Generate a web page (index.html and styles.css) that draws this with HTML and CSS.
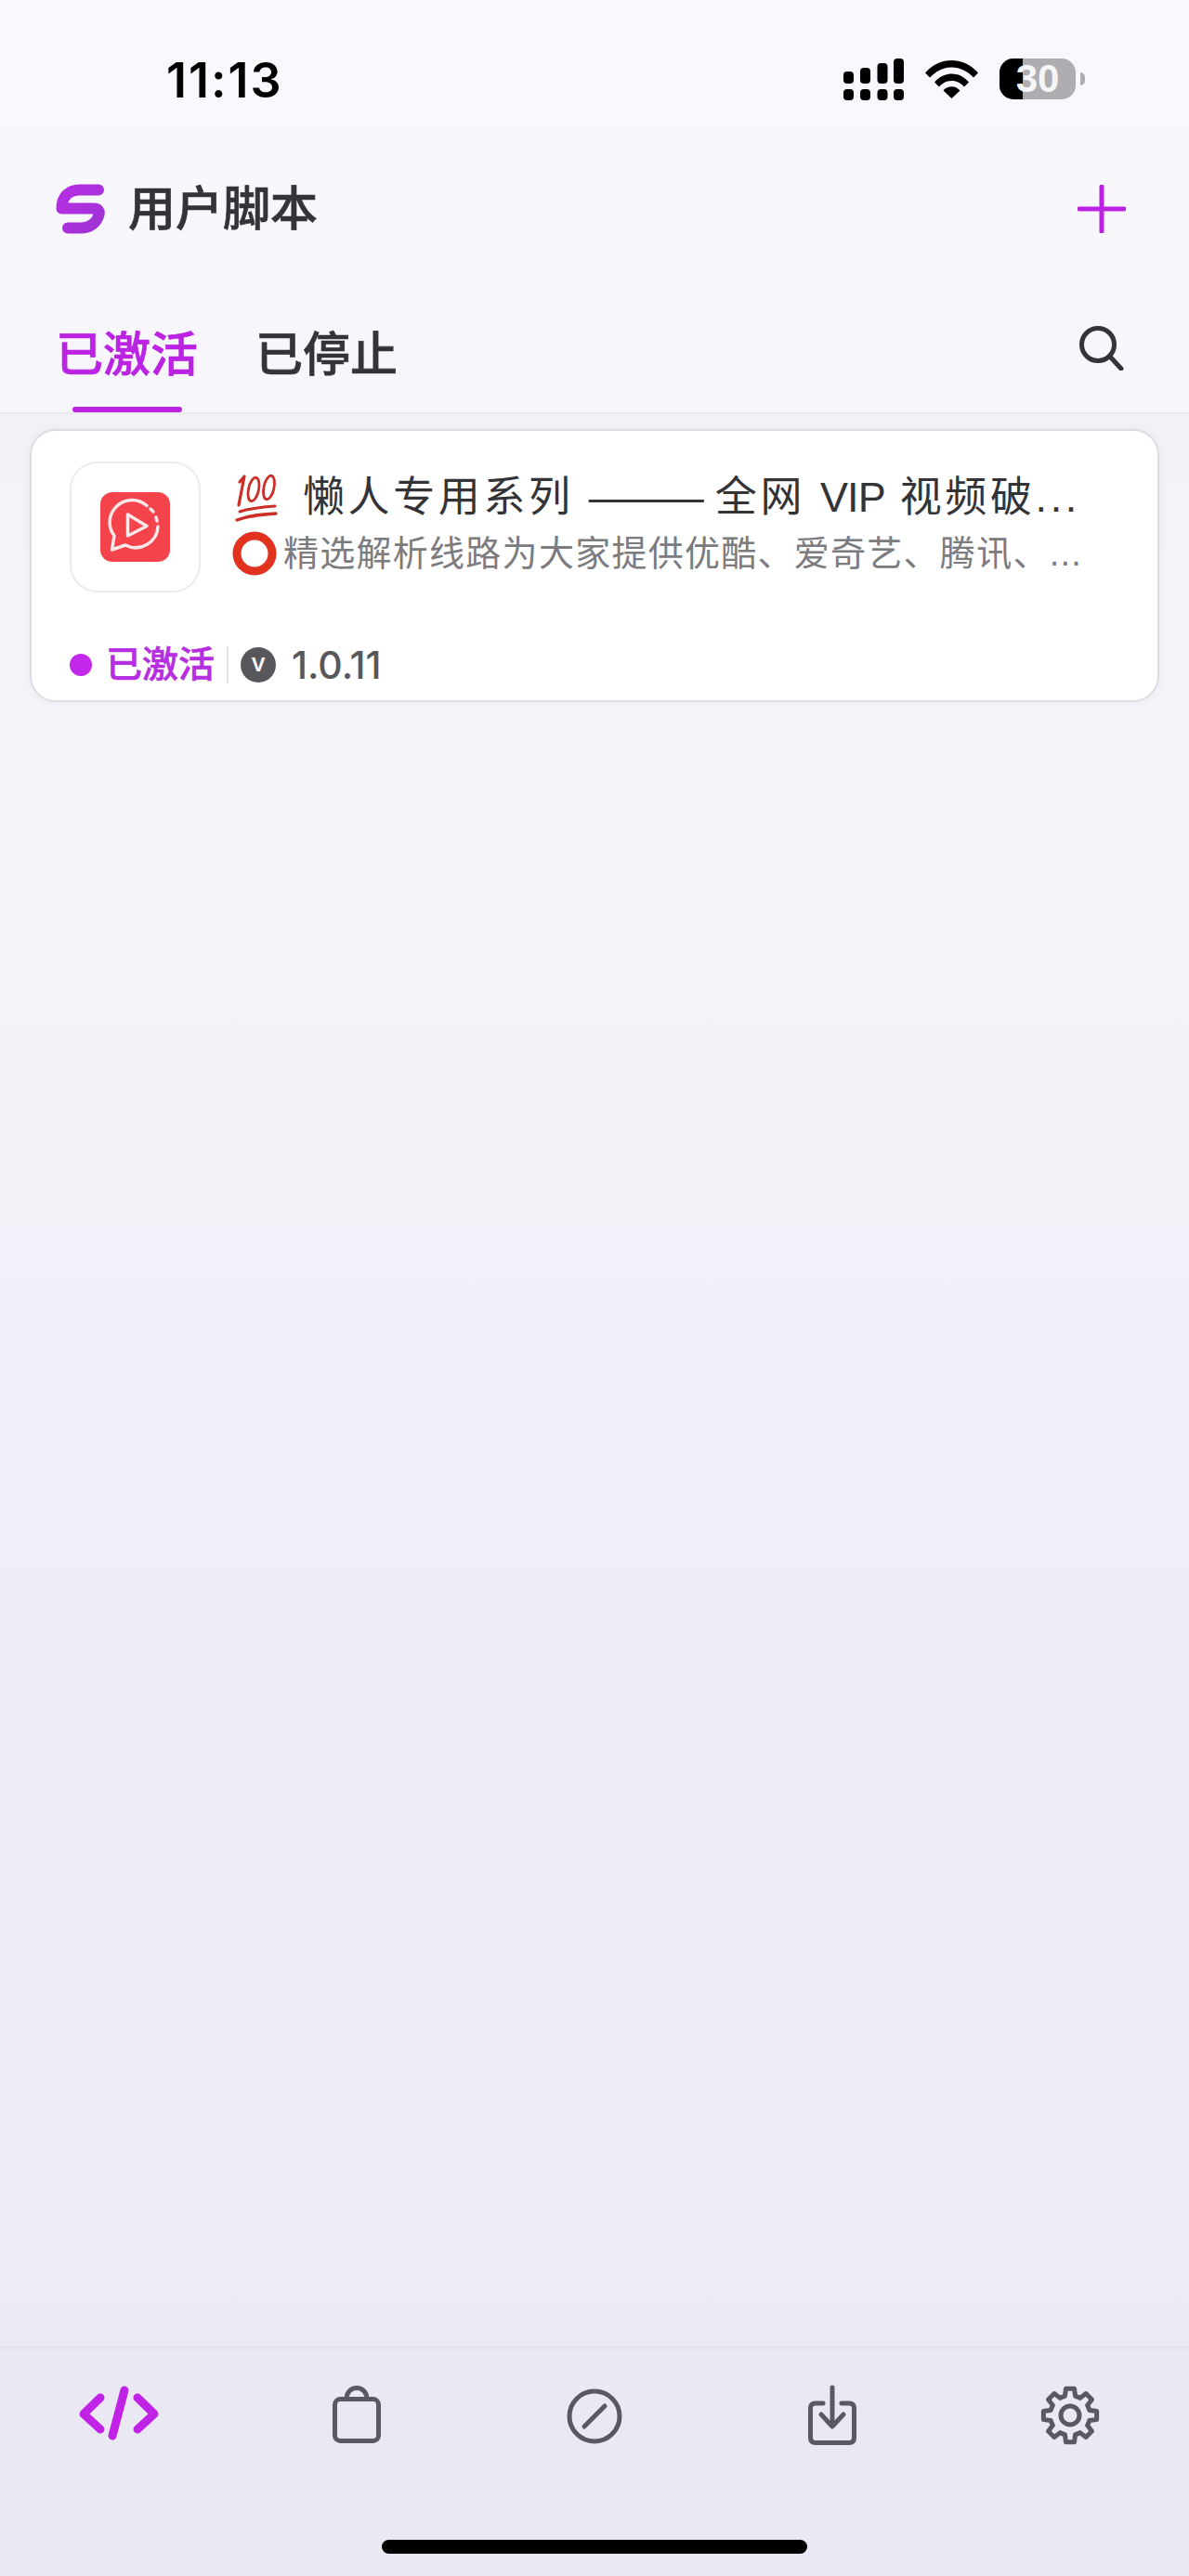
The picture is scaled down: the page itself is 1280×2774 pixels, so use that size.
FILE: index.html
```html
<!DOCTYPE html>
<html lang="zh-CN">
<head>
<meta charset="utf-8">
<title>用户脚本</title>
<link rel="stylesheet" href="styles.css">
</head>
<body>
<div class="app">
  <div class="statusbar">
    <span class="clock">11:13</span>
    <div class="status-icons">
      <svg class="signal" width="65" height="45" viewBox="0 0 65 45" aria-hidden="true">
        <rect x="0" y="14" width="11" height="13" rx="4"/>
        <rect x="18" y="10" width="11" height="17" rx="4"/>
        <rect x="36.500" y="5" width="11" height="22" rx="4"/>
        <rect x="54" y="0" width="11" height="27" rx="4"/>
        <rect x="0" y="33" width="11" height="12" rx="4"/>
        <rect x="18" y="33" width="11" height="12" rx="4"/>
        <rect x="36.500" y="33" width="11" height="12" rx="4"/>
        <rect x="54" y="33" width="11" height="12" rx="4"/>
      </svg>
      <svg class="wifi" width="57" height="41" viewBox="0 0 57 41" aria-hidden="true">
        <path d="M0 13.500C7.500 4.800 17.500 0 28.500 0S49.500 4.800 57 13.500L52 18.500C45.500 11.500 37.500 7.500 28.500 7.500S11.500 11.500 5 18.500Z"/>
        <path d="M10 23.500C14.800 17.800 21.300 14.500 28.500 14.500S42.200 17.800 47 23.500L42 28.500C38.500 24.500 33.800 22 28.500 22S18.500 24.500 15 28.500Z"/>
        <path d="M19.500 32.500C22 29.800 25 28.300 28.500 28.300S35 29.800 37.500 32.500L28.500 41Z"/>
      </svg>
      <div class="battery">
        <div class="battery-body">
          <span class="battery-fill"></span>
          <span class="battery-level">30</span>
        </div>
        <span class="battery-cap"></span>
      </div>
    </div>
  </div>

  <header class="topbar">
    <div class="brand">
      <svg class="brand-mark" width="53" height="54" viewBox="0 0 53 54" aria-hidden="true">
        <defs>
          <linearGradient id="markFill" x1="0" y1="0" x2="1" y2="1">
            <stop offset="0" stop-color="#b62fe4"/>
            <stop offset="1" stop-color="#9f32d4"/>
          </linearGradient>
        </defs>
        <path d="M46 6.500H26C14 6.500 6.500 14 6.500 26.500H41C45.500 26.500 47.500 29 46.500 33C44.500 42 36.500 47.500 27 47.500H13" fill="none" stroke="url(#markFill)" stroke-width="12" stroke-linecap="round" stroke-linejoin="round"/>
      </svg>
      <h1 class="brand-title">用户脚本</h1>
    </div>
    <svg class="add-icon" width="52" height="52" viewBox="0 0 52 52" aria-hidden="true">
      <path d="M26 2V50M2 26H50"/>
    </svg>
  </header>

  <nav class="tabs">
    <div class="tab tab-active">已激活<span class="tab-line"></span></div>
    <div class="tab">已停止</div>
    <svg class="search-icon" width="48" height="48" viewBox="0 0 48 48" aria-hidden="true">
      <circle cx="20" cy="20" r="17.500"/>
      <path d="M32.500 32.500L45 46"/>
    </svg>
  </nav>

  <main class="list">
    <article class="card">
      <div class="card-top">
        <div class="app-icon">
          <svg width="75" height="75" viewBox="0 0 75 75" aria-hidden="true">
            <rect width="75" height="75" rx="13" fill="#f5434b"/>
            <path d="M50 14.500A24 24 0 0 0 15 47L12.500 62L27 57A24 24 0 0 0 62 37" fill="none" stroke="#fbe7e8" stroke-width="3.500" stroke-linejoin="round" stroke-linecap="round"/>
            <path d="M54 18L57 21M60 27L61 31" fill="none" stroke="#fbe7e8" stroke-width="3.500" stroke-linecap="round"/>
            <path d="M29.500 24V47L50 36.500Z" fill="none" stroke="#fbe7e8" stroke-width="3.500" stroke-linejoin="round"/>
          </svg>
        </div>
        <div class="card-text">
          <div class="script-name">
            <svg class="emoji-hundred" width="48" height="52" viewBox="0 0 48 52" role="img" aria-label="💯">
              <g fill="none" stroke="#cb2f27" stroke-linecap="round">
                <path d="M6 9L11 3L5 34" stroke-width="3.200" stroke-linejoin="round"/>
                <ellipse cx="21" cy="17" rx="5.500" ry="13" transform="rotate(12 21 17)" stroke-width="2.800"/>
                <ellipse cx="37.500" cy="15" rx="5.500" ry="13" transform="rotate(12 37.500 15)" stroke-width="2.800"/>
                <path d="M6 41C18 37 30 36 44 35" stroke-width="3"/>
                <path d="M3 50C16 45 30 44 45 43" stroke-width="3.400"/>
              </g>
            </svg>
            <span class="script-name-text">懒人专用系列 <span class="name-dash">———</span> 全网 <span class="name-latin">VIP</span> 视频破...</span>
          </div>
          <div class="script-desc">
            <svg class="emoji-ring" width="48" height="48" viewBox="0 0 48 48" role="img" aria-label="⭕">
              <circle cx="24" cy="24" r="19" fill="none" stroke="#e1311f" stroke-width="9"/>
            </svg>
            <span class="script-desc-text">精选解析线路为大家提供优酷、爱奇艺、腾讯、...</span>
          </div>
        </div>
      </div>
      <div class="card-meta">
        <span class="meta-dot"></span>
        <span class="meta-state">已激活</span>
        <span class="meta-divider"></span>
        <span class="meta-badge">V</span>
        <span class="meta-version">1.0.11</span>
      </div>
    </article>
  </main>

  <footer class="bottom">
    <div class="bottom-nav">
      <div class="nav-item nav-active">
        <svg width="88" height="58" viewBox="0 0 88 58" aria-hidden="true">
          <path d="M24 12L6 29.500L24 46M64 12L82 29.500L64 46M50 4L37 53"/>
        </svg>
      </div>
      <div class="nav-item">
        <svg width="52" height="62" viewBox="0 0 52 62" aria-hidden="true">
          <rect x="2.500" y="14.500" width="47" height="45" rx="6"/>
          <path d="M15 14.500C15 7 20 2.500 26 2.500S37 7 37 14.500"/>
        </svg>
      </div>
      <div class="nav-item nav-lower">
        <svg width="60" height="60" viewBox="0 0 60 60" aria-hidden="true">
          <circle cx="30" cy="30" r="27"/>
          <path d="M19 41L41 19"/>
        </svg>
      </div>
      <div class="nav-item">
        <svg width="52" height="64" viewBox="0 0 52 64" aria-hidden="true">
          <path d="M16 19H8C4.500 19 2.500 21 2.500 24.500V56C2.500 59.500 4.500 61.500 8 61.500H44C47.500 61.500 49.500 59.500 49.500 56V24.500C49.500 21 47.500 19 44 19H36"/>
          <path d="M26 2V43M14 31L26 44L38 31"/>
        </svg>
      </div>
      <div class="nav-item">
        <svg width="64" height="64" viewBox="-32 -32 64 64" aria-hidden="true">
          <path d="M20.770 -5.560L28.640 -4.540V4.540L20.770 5.560A21.500 21.500 0 0 1 18.620 10.750L23.460 17.050L17.050 23.460L10.750 18.620A21.500 21.500 0 0 1 5.560 20.770L4.540 28.640H-4.540L-5.560 20.770A21.500 21.500 0 0 1 -10.750 18.620L-17.050 23.460L-23.460 17.050L-18.620 10.750A21.500 21.500 0 0 1 -20.770 5.560L-28.640 4.540V-4.540L-20.770 -5.560A21.500 21.500 0 0 1 -18.620 -10.750L-23.460 -17.050L-17.050 -23.460L-10.750 -18.620A21.500 21.500 0 0 1 -5.560 -20.770L-4.540 -28.640H4.540L5.560 -20.770A21.500 21.500 0 0 1 10.750 -18.620L17.050 -23.460L23.460 -17.050L18.620 -10.750A21.500 21.500 0 0 1 20.770 -5.560Z"/>
          <circle cx="0" cy="0" r="10"/>
        </svg>
      </div>
    </div>
    <div class="home-bar"></div>
  </footer>
</div>
</body>
</html>
```
FILE: styles.css
```css
* {
  box-sizing: border-box;
}

html,
body {
  margin: 0;
  padding: 0;
}

body {
  font-family: "Liberation Sans", "Noto Sans CJK SC", sans-serif;
  color: #333338;
}

.app {
  width: 1280px;
  height: 2774px;
  display: flex;
  flex-direction: column;
  background: linear-gradient(180deg, #f8f8fd 0%, #f4f3f9 35%, #eeecf5 70%, #ebe9f3 100%);
  overflow: hidden;
}

/* Status bar */
.statusbar {
  height: 130px;
  flex: none;
  display: flex;
  justify-content: space-between;
  padding: 63px 112px 0 179px;
}

.clock {
  font-family: Inter, sans-serif;
  font-size: 52px;
  line-height: 48px;
  font-weight: 600;
  color: #000;
  letter-spacing: 2px;
}

.status-icons {
  display: flex;
  align-items: flex-start;
  gap: 23px;
}

.signal,
.wifi {
  fill: #000;
  display: block;
}

.wifi {
  margin-top: 2px;
}

.battery {
  display: flex;
  align-items: center;
  gap: 5px;
  height: 44px;
}

.battery-body {
  position: relative;
  width: 82px;
  height: 44px;
  border-radius: 15px;
  background: #aeaeb2;
  display: flex;
  align-items: center;
  justify-content: center;
}

.battery-fill {
  position: absolute;
  left: 0;
  top: 0;
  bottom: 0;
  width: 25px;
  border-radius: 15px 0 0 15px;
  background: #000;
}

.battery-level {
  position: relative;
  font-size: 42px;
  font-weight: 700;
  line-height: 44px;
  color: #f6f6f8;
}

.battery-cap {
  width: 5px;
  height: 14px;
  background: #aeaeb2;
  border-radius: 0 5px 5px 0;
}

/* Title row */
.topbar {
  height: 54px;
  margin-top: 68px;
  flex: none;
  display: flex;
  align-items: center;
  justify-content: space-between;
  padding: 0 68px 0 60px;
}

.brand {
  display: flex;
  align-items: center;
  gap: 25px;
}

.brand-mark {
  display: block;
}

.brand-title {
  margin: 0;
  padding-top: 2px;
  font-size: 51px;
  font-weight: 500;
  line-height: 54px;
  color: #333338;
  -webkit-text-stroke: 0.7px #333338;
}

.add-icon path {
  fill: none;
  stroke: #bb22e2;
  stroke-width: 5;
  stroke-linecap: round;
}

/* Tabs */
.tabs {
  height: 194px;
  flex: none;
  display: flex;
  align-items: flex-start;
  gap: 62px;
  padding: 101px 70px 0 60px;
  border-bottom: 2px solid #e9e9ee;
}

.tab {
  position: relative;
  height: 91px;
  font-size: 51px;
  line-height: 60px;
  font-weight: 500;
  color: #333338;
  -webkit-text-stroke: 0.7px #333338;
}

.tab-active {
  color: #bb22e2;
  -webkit-text-stroke-color: #bb22e2;
}

.tab-line {
  position: absolute;
  left: 18px;
  right: 17px;
  bottom: 0;
  height: 6px;
  border-radius: 3px;
  background: #bb22e2;
}

.search-icon {
  margin-left: auto;
  margin-top: -2px;
  display: block;
}

.search-icon circle,
.search-icon path {
  fill: none;
  stroke: #333338;
  stroke-width: 5;
  stroke-linecap: round;
}

/* Script list */
.list {
  flex: 1;
  padding: 16px 32px 0;
  background: linear-gradient(180deg, #f1f1f6 0, rgba(241, 241, 246, 0) 320px);
}

.card {
  height: 294px;
  background: #fff;
  border: 2px solid #dcdce3;
  border-radius: 28px;
  padding: 33px 42px 0 41px;
  box-shadow: 0 0 10px rgba(120, 110, 150, 0.08);
}

.card-top {
  display: flex;
  align-items: flex-start;
  gap: 36px;
}

.app-icon {
  width: 141px;
  height: 141px;
  flex: none;
  border: 2px solid #ececef;
  border-radius: 30px;
  display: flex;
  align-items: center;
  justify-content: center;
}

.app-icon svg {
  display: block;
}

.card-text {
  min-width: 0;
  flex: 1;
}

.script-name {
  height: 60px;
  margin-top: 9px;
  display: flex;
  align-items: center;
  gap: 26px;
}

.emoji-hundred,
.emoji-ring {
  display: block;
  flex: none;
}

.script-name-text {
  font-size: 45px;
  line-height: 60px;
  letter-spacing: 3.600px;
  white-space: nowrap;
  color: #333338;
}

.name-dash {
  font-size: 44px;
  letter-spacing: -4px;
}

.name-latin {
  letter-spacing: -1px;
}

.script-desc {
  height: 50px;
  margin-top: 5px;
  margin-left: -2px;
  display: flex;
  align-items: center;
  gap: 7px;
}

.script-desc-text {
  font-size: 38px;
  line-height: 50px;
  letter-spacing: 1.270px;
  white-space: nowrap;
  color: #7b7b80;
}

.card-meta {
  margin-top: 58px;
  height: 40px;
  display: flex;
  align-items: center;
}

.meta-dot {
  width: 24px;
  height: 24px;
  border-radius: 50%;
  background: #c427ec;
}

.meta-state {
  margin-left: 15px;
  font-size: 39px;
  line-height: 40px;
  font-weight: 500;
  color: #b52ee0;
  -webkit-text-stroke: 0.6px #b52ee0;
}

.meta-divider {
  width: 2px;
  height: 40px;
  margin: 0 13px;
  background: #e2e2e6;
}

.meta-badge {
  width: 38px;
  height: 38px;
  border-radius: 50%;
  background: #58585c;
  color: #fff;
  font-size: 22px;
  font-weight: 700;
  line-height: 38px;
  text-align: center;
}

.meta-version {
  margin-left: 17px;
  font-family: Inter, sans-serif;
  font-size: 41px;
  line-height: 40px;
  font-weight: 500;
  color: #58585c;
}

/* Bottom navigation */
.bottom {
  flex: none;
  height: 247px;
  border-top: 2px solid #e4e2ec;
  background: #eae8f2;
}

.bottom-nav {
  height: 206px;
  display: grid;
  grid-template-columns: repeat(5, 1fr);
  align-items: start;
}

.nav-item {
  display: flex;
  justify-content: center;
  padding-top: 40px;
}

.nav-active {
  padding-top: 41px;
}

.nav-lower {
  padding-top: 43px;
}

.nav-item svg {
  display: block;
  overflow: visible;
}

.nav-item svg path,
.nav-item svg circle,
.nav-item svg rect {
  fill: none;
  stroke: #5a5861;
  stroke-width: 5;
  stroke-linecap: round;
  stroke-linejoin: round;
}

.nav-active svg path {
  stroke: #c022e6;
  stroke-width: 9;
}

.home-bar {
  width: 458px;
  height: 15px;
  margin: 0 auto;
  border-radius: 8px;
  background: #000;
}
```
